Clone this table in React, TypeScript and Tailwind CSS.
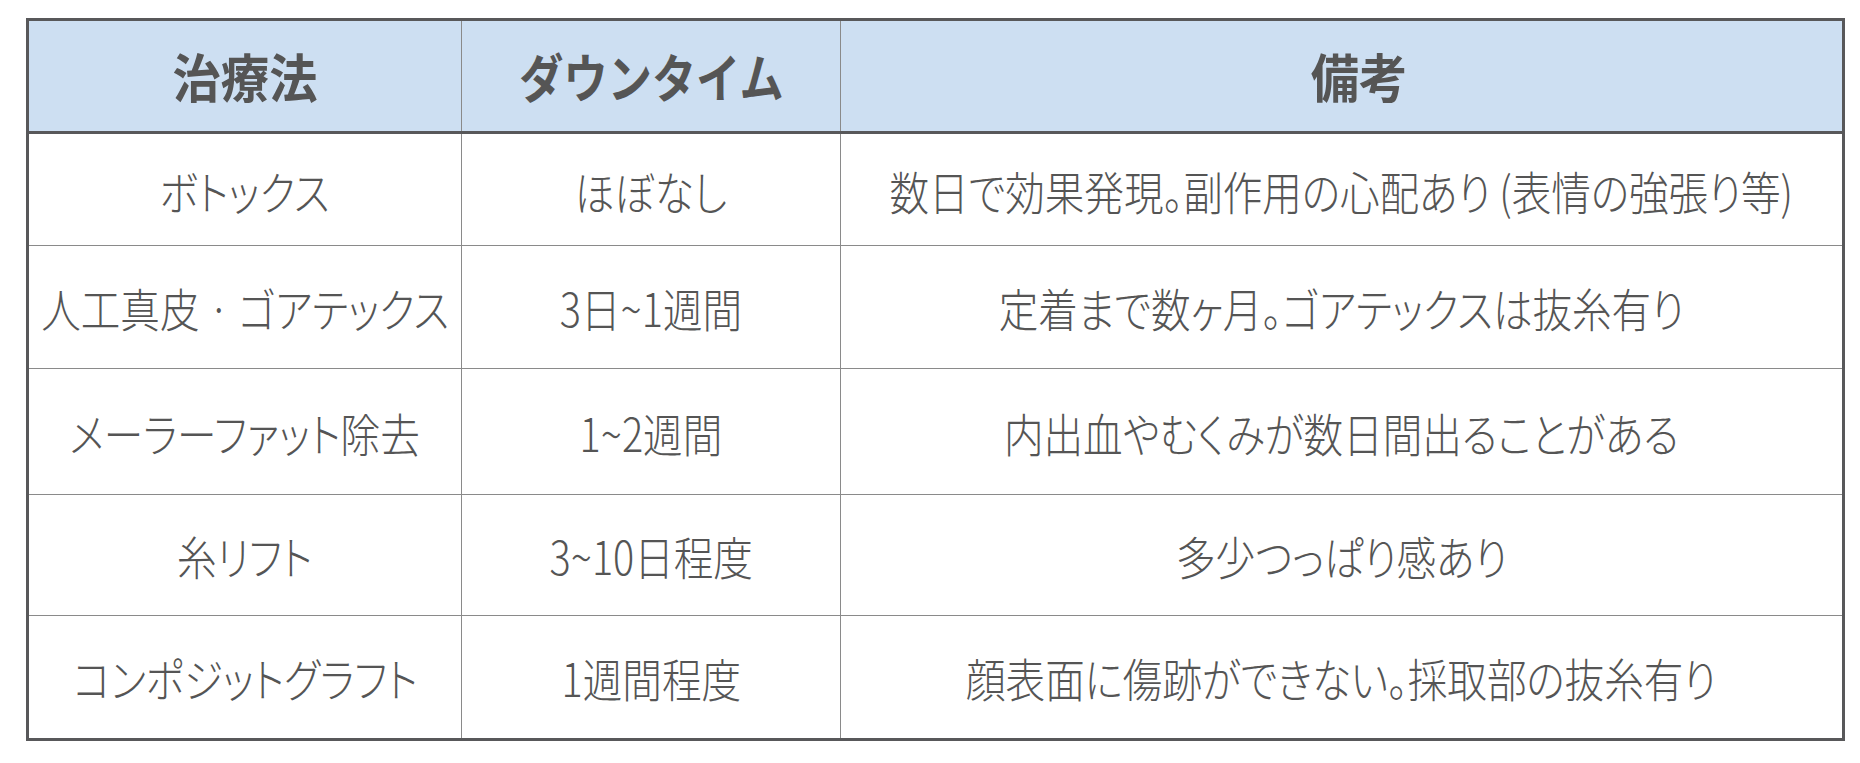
import React from "react";

const rows: { a: string; b: string; c: string; h: string; last?: boolean }[] = [
  { a: "ボトックス", b: "ほぼなし", c: "数日で効果発現。副作用の心配あり (表情の強張り等)", h: "h-[112px]" },
  { a: "人工真皮 · ゴアテックス", b: "3日~1週間", c: "定着まで数ヶ月。ゴアテックスは抜糸有り", h: "h-[123px]" },
  { a: "メーラーファット除去", b: "1~2週間", c: "内出血やむくみが数日間出ることがある", h: "h-[126px]" },
  { a: "糸リフト", b: "3~10日程度", c: "多少つっぱり感あり", h: "h-[121px]" },
  { a: "コンポジットグラフト", b: "1週間程度", c: "顔表面に傷跡ができない。採取部の抜糸有り", h: "h-[122px]", last: true },
];

function Txt({ children }: { children: React.ReactNode }) {
  return (
    <span className="inline-block whitespace-nowrap text-[46px] leading-none font-light text-[#555555] scale-x-[0.86] [font-feature-settings:'palt']">
      {children}
    </span>
  );
}

export default function App() {
  return (
    <div
      className="w-[1860px] h-[763px] bg-white pt-[18px] pl-[26px]"
      style={{ fontFamily: '"Noto Sans CJK JP", "Noto Sans", sans-serif' }}
    >
      <div className="w-[1819px] border-[3px] border-[#58585a] flex flex-col">
        <div className="flex h-[113px] bg-[#cddff2] border-b-[3px] border-[#58585a]">
          <div className="w-[433px] shrink-0 border-r border-[#8a8a8a] flex items-center justify-center">
            <span className="inline-block text-[52px] font-bold text-[#555555] leading-none scale-x-[0.93]">治療法</span>
          </div>
          <div className="w-[379px] shrink-0 border-r border-[#8a8a8a] flex items-center justify-center">
            <span className="inline-block text-[52px] font-bold text-[#555555] leading-none scale-x-[0.85]">ダウンタイム</span>
          </div>
          <div className="flex-1 flex items-center justify-center pl-[36px]">
            <span className="inline-block text-[52px] font-bold text-[#555555] leading-none scale-x-[0.93]">備考</span>
          </div>
        </div>
        {rows.map((r, i) => (
          <div
            key={i}
            className={`flex ${r.h} ${r.last ? "" : "border-b border-[#8a8a8a]"}`}
          >
            <div className="w-[433px] shrink-0 border-r border-[#8a8a8a] flex items-center justify-center">
              <Txt>{r.a}</Txt>
            </div>
            <div className="w-[379px] shrink-0 border-r border-[#8a8a8a] flex items-center justify-center">
              <Txt>{r.b}</Txt>
            </div>
            <div className="flex-1 flex items-center justify-center min-w-0">
              <Txt>{r.c}</Txt>
            </div>
          </div>
        ))}
      </div>
    </div>
  );
}
